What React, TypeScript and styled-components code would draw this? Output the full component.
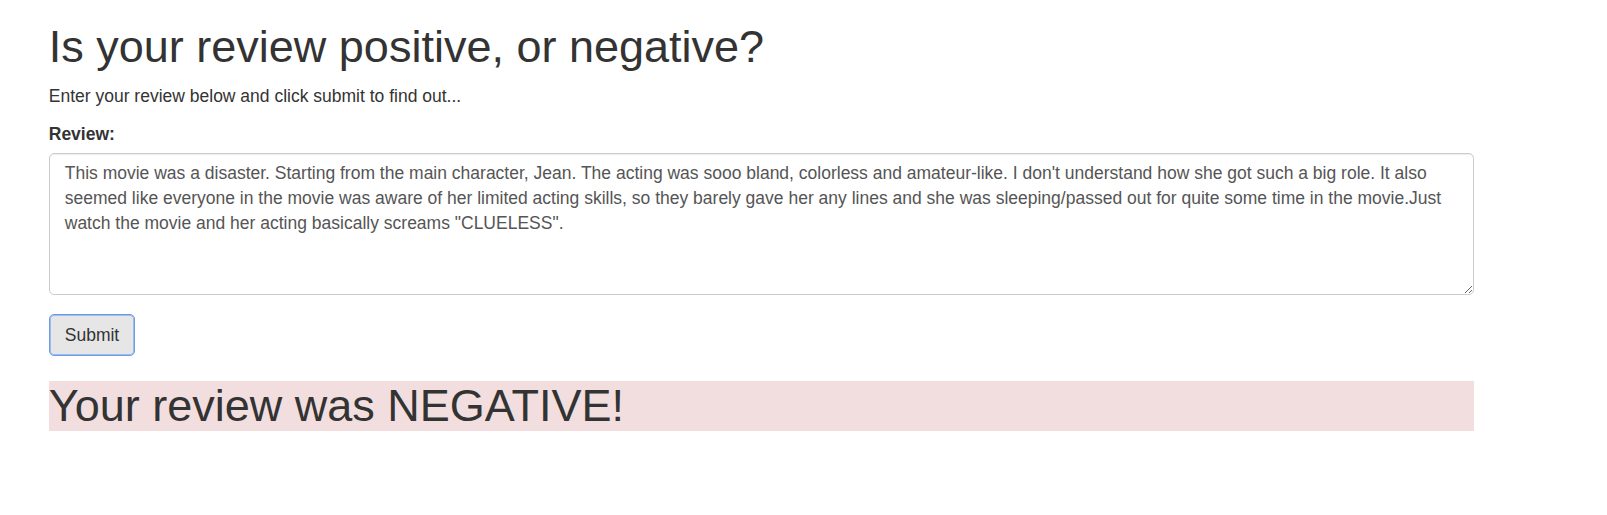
import React from "react";
import styled, { createGlobalStyle } from "styled-components";

const GlobalStyle = createGlobalStyle`
  * { box-sizing: border-box; }
  html, body { margin: 0; padding: 0; background: #fff; }
  body {
    font-family: "Liberation Sans", Arial, Helvetica, sans-serif;
    font-size: 17.5px;
    line-height: 1.42857143;
    color: #333;
  }
`;

const Container = styled.div`
  padding-left: 48.75px;
  width: 1473.75px;
`;

const Title = styled.h1<{ $danger?: boolean }>`
  font-family: "Liberation Sans", Arial, Helvetica, sans-serif;
  font-weight: 500;
  font-size: 45px;
  line-height: 1.1;
  color: #333;
  margin: ${(p) => (p.$danger ? "25px 0 0" : "22px 0 12.5px")};
  background: ${(p) => (p.$danger ? "#f2dede" : "transparent")};
`;

const Lead = styled.p`
  margin: 0 0 12.5px;
`;

const FormGroup = styled.div`
  margin-bottom: 18.75px;
`;

const Label = styled.label`
  display: inline-block;
  font-weight: 700;
  margin-bottom: 6.25px;
  max-width: 100%;
`;

const TextArea = styled.textarea`
  display: block;
  width: 100%;
  height: 142.5px;
  padding: 7.5px 15px;
  font-family: "Liberation Sans", Arial, Helvetica, sans-serif;
  font-size: 17.5px;
  line-height: 1.42857143;
  color: #555;
  background: #fff;
  border: 1.25px solid #ccc;
  border-radius: 5px;
  box-shadow: inset 0 1px 1px rgba(0, 0, 0, 0.075);
  resize: vertical;
  margin: 0;
  outline: none;
`;

const Button = styled.button`
  display: inline-block;
  padding: 7.5px 15px;
  font-family: "Liberation Sans", Arial, Helvetica, sans-serif;
  font-size: 17.5px;
  line-height: 1.42857143;
  color: #333;
  background: #e6e6e6;
  border: 1.25px solid #6a9ce9;
  box-shadow: inset 0 0 0 1px #9ebdee;
  border-radius: 5px;
  cursor: pointer;
  margin: 0;
  outline: none;
`;

const review =
  'This movie was a disaster. Starting from the main character, Jean. The acting was sooo bland, colorless and amateur-like. I don\'t understand how she got such a big role. It also seemed like everyone in the movie was aware of her limited acting skills, so they barely gave her any lines and she was sleeping/passed out for quite some time in the movie.Just watch the movie and her acting basically screams "CLUELESS".';

export default function App() {
  return (
    <>
      <GlobalStyle />
      <Container>
        <Title>Is your review positive, or negative?</Title>
        <Lead>Enter your review below and click submit to find out...</Lead>
        <form onSubmit={(e) => e.preventDefault()}>
          <FormGroup>
            <Label htmlFor="review">Review:</Label>
            <TextArea id="review" rows={5} defaultValue={review} />
          </FormGroup>
          <Button type="submit">Submit</Button>
        </form>
        <Title $danger>Your review was NEGATIVE!</Title>
      </Container>
    </>
  );
}
